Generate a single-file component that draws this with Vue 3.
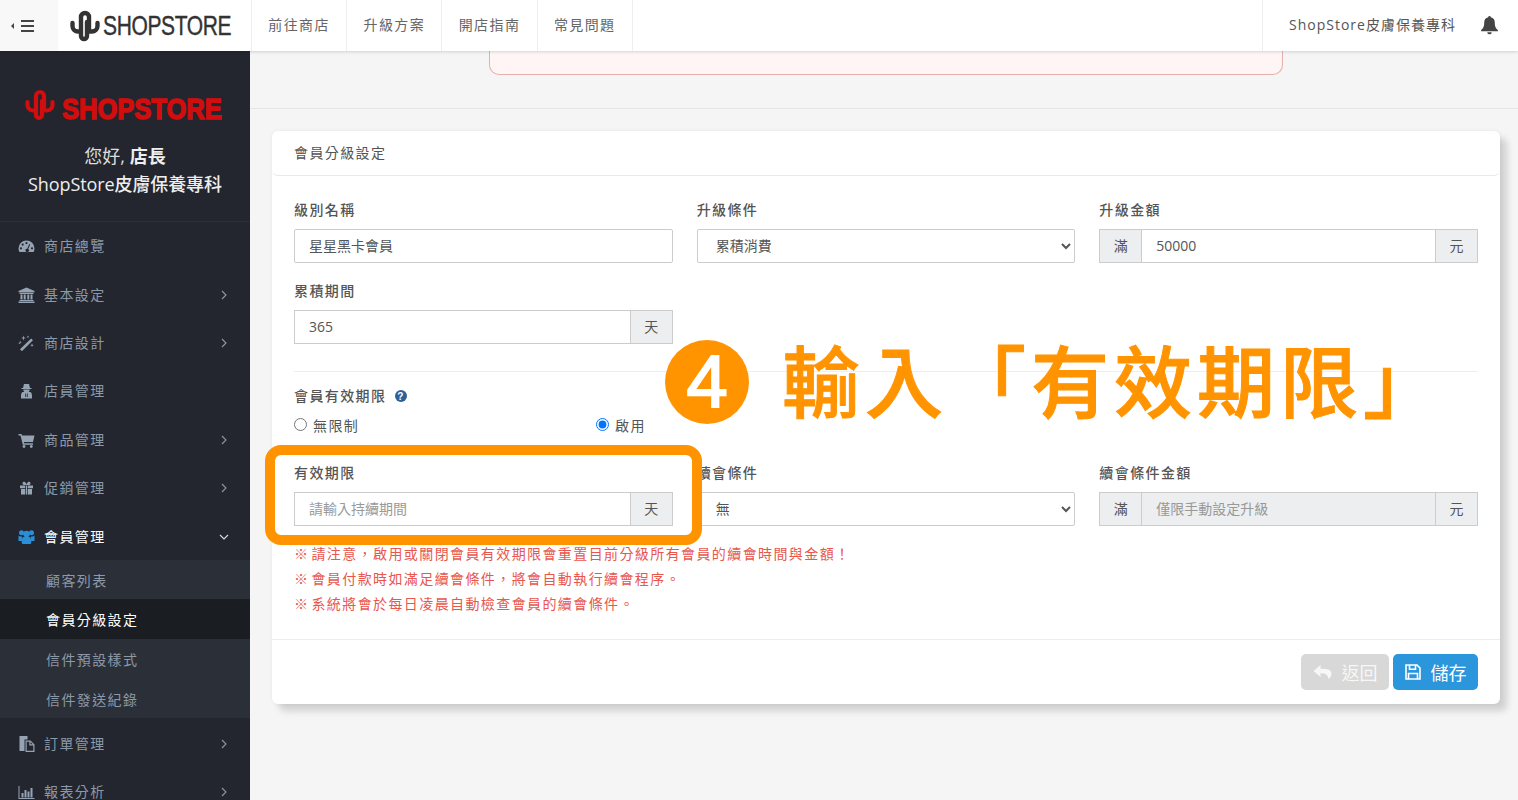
<template>
  <div class="page">
    <header class="topbar">
      <div class="toggle">
        <span class="toggle-arrow"></span>
        <span class="toggle-bars"><i></i><i></i><i></i></span>
      </div>
      <div class="brand">
        <svg class="brand-mark" viewBox="0 0 32 32"><path :d="logoPath" /></svg>
        <span class="brand-text">SHOPSTORE</span>
      </div>
      <nav class="topnav">
        <a v-for="item in topLinks" :key="item">{{ item }}</a>
      </nav>
      <div class="top-right">
        <span class="store-name">ShopStore皮膚保養專科</span>
        <svg class="bell" viewBox="0 0 16 18">
          <path d="M8 0a1.2 1.2 0 0 0-1.2 1.3C4.3 1.8 3 3.8 3 6.200c0 4.300-1.300 5.800-3 7.300v1h16v-1c-1.700-1.500-3-3-3-7.300 0-2.400-1.300-4.400-3.800-4.900A1.200 1.200 0 0 0 8 0zM5.900 15.300a2.100 2.100 0 0 0 4.200 0z" />
        </svg>
      </div>
    </header>

    <div class="layout">
      <aside class="sidebar">
        <div class="side-head">
          <div class="side-logo">
            <svg class="side-mark" viewBox="0 0 32 32"><path :d="logoPath" /></svg>
            <span class="side-logo-text">SHOPSTORE</span>
          </div>
          <p class="hello">您好, <b>店長</b></p>
          <p class="side-store">ShopStore皮膚保養專科</p>
        </div>
        <ul class="menu">
          <template v-for="item in menu" :key="item.name">
            <li class="menu-item" :class="{ open: item.children }">
              <svg class="menu-icon" viewBox="0 0 16 16" v-html="icons[item.icon]"></svg>
              <span>{{ item.name }}</span>
              <svg v-if="item.children" class="chev" viewBox="0 0 10 10"><path d="M1 3l4 4 4-4" /></svg>
              <svg v-else-if="item.arrow" class="chev" viewBox="0 0 10 10"><path d="M3 1l4 4-4 4" /></svg>
            </li>
            <ul v-if="item.children" class="submenu">
              <li v-for="sub in item.children" :key="sub" :class="{ active: sub === '會員分級設定' }">{{ sub }}</li>
            </ul>
          </template>
        </ul>
      </aside>

      <main class="content">
        <div class="alert-section">
          <div class="alert-box"></div>
        </div>
        <div class="content-body">
          <section class="card">
            <div class="card-head">會員分級設定</div>
            <div class="card-body">
              <div class="form-grid">
                <div class="field">
                  <label>級別名稱</label>
                  <input class="input" type="text" value="星星黑卡會員" />
                </div>
                <div class="field">
                  <label>升級條件</label>
                  <select class="input select"><option>累積消費</option></select>
                </div>
                <div class="field">
                  <label>升級金額</label>
                  <div class="group">
                    <span class="addon">滿</span>
                    <input class="input" type="text" value="50000" />
                    <span class="addon">元</span>
                  </div>
                </div>
                <div class="field">
                  <label>累積期間</label>
                  <div class="group">
                    <input class="input" type="text" value="365" />
                    <span class="addon">天</span>
                  </div>
                </div>
              </div>

              <hr class="divider" />

              <div class="expire-title">
                會員有效期限
                <svg class="help" viewBox="0 0 12 12">
                  <circle cx="6" cy="6" r="6" />
                  <text x="6" y="9.600" text-anchor="middle">?</text>
                </svg>
              </div>
              <div class="radio-row">
                <label class="radio"><input type="radio" name="expire" />無限制</label>
                <label class="radio"><input type="radio" name="expire" checked />啟用</label>
              </div>

              <div class="form-grid">
                <div class="field">
                  <label>有效期限</label>
                  <div class="group">
                    <input class="input" type="text" placeholder="請輸入持續期間" />
                    <span class="addon">天</span>
                  </div>
                </div>
                <div class="field">
                  <label>續會條件</label>
                  <select class="input select"><option>無</option></select>
                </div>
                <div class="field">
                  <label>續會條件金額</label>
                  <div class="group">
                    <span class="addon">滿</span>
                    <input class="input" type="text" placeholder="僅限手動設定升級" disabled />
                    <span class="addon">元</span>
                  </div>
                </div>
              </div>

              <div class="notes">
                <p v-for="note in notes" :key="note">{{ note }}</p>
              </div>
            </div>
            <div class="card-foot">
              <button class="btn btn-back">
                <svg viewBox="0 0 18 16"><path d="M7 1L0 7l7 6V9.300c4.500 0 7 1 8 5.700 1.500-1 3-2.800 3-5.500C18 5.500 13.500 4.600 7 4.700z" /></svg>
                返回
              </button>
              <button class="btn btn-save">
                <svg viewBox="0 0 16 16"><path d="M1 1h11l3 3v11H1zM4.500 1v4.200h6V1M3.500 15V9.500h9V15" /></svg>
                儲存
              </button>
            </div>
          </section>
        </div>
      </main>
    </div>

    <!-- 教學標註 -->
    <div class="mark-box"></div>
    <div class="mark-num">4</div>
    <div class="mark-text">輸入「有效期限」</div>
  </div>
</template>

<script setup>
const logoPath = 'M2.500 13v3a5.500 5.500 0 0 0 5.500 5.500h3M11 26V7a4 4 0 0 1 8 0v14.500h3a5.500 5.500 0 0 0 5.500-5.500v-3M11 26a3 3 0 0 0 6 0V12'

const topLinks = ['前往商店', '升級方案', '開店指南', '常見問題']

const notes = [
  '※ 請注意，啟用或關閉會員有效期限會重置目前分級所有會員的續會時間與金額！',
  '※ 會員付款時如滿足續會條件，將會自動執行續會程序。',
  '※ 系統將會於每日凌晨自動檢查會員的續會條件。',
]

const menu = [
  { name: '商店總覽', icon: 'dashboard' },
  { name: '基本設定', icon: 'bank', arrow: true },
  { name: '商店設計', icon: 'magic', arrow: true },
  { name: '店員管理', icon: 'secret' },
  { name: '商品管理', icon: 'cart', arrow: true },
  { name: '促銷管理', icon: 'gift', arrow: true },
  { name: '會員管理', icon: 'users', children: ['顧客列表', '會員分級設定', '信件預設樣式', '信件發送紀錄'] },
  { name: '訂單管理', icon: 'files', arrow: true },
  { name: '報表分析', icon: 'chart', arrow: true },
]

const icons = {
  dashboard: '<path fill-rule="evenodd" d="M8 2.500a8 8 0 0 0-8 8c0 1.300.3 2.500.9 3.500h14.200c.6-1 .9-2.200.9-3.500a8 8 0 0 0-8-8zM8 4a1.100 1.100 0 1 1 0 2.200A1.100 1.100 0 0 1 8 4zM4.200 5.500a1.100 1.100 0 1 1 0 2.200 1.100 1.100 0 0 1 0-2.200zM2.500 9.200a1.100 1.100 0 1 1 0 2.200 1.100 1.100 0 0 1 0-2.200zm11 0a1.100 1.100 0 1 1 0 2.200 1.100 1.100 0 0 1 0-2.200zM10.800 6l.9.400-2 4.600a1.700 1.700 0 1 1-1-.300z"/>',
  bank: '<path d="M8 .5L16 4v1.200H0V4zM1 5.800h14V7H1zM2 7.500h2v5H2zM5.200 7.500h2v5h-2zM8.800 7.500h2v5h-2zM12 7.500h2v5h-2zM1 13h14v1H1zM0 14.500h16V16H0z"/>',
  magic: '<path d="M12.600 3.400l1.900 1.900L3.400 16.200l-1.900-1.900z"/><path d="M5 .5l.6 1.900 1.900.6-1.900.6L5 5.500l-.6-1.900L2.500 3l1.900-.6zM1.500 5.500l.5 1.200 1.200.5-1.200.5-.5 1.200L1 8.700l-1.200-.5L1 7.700zM13.500 8.500l.5 1.200 1.200.5-1.200.5-.5 1.200-.5-1.200-1.200-.5 1.200-.5zM9.500.5l.4 1 1 .4-1 .4-.4 1-.4-1-1-.4 1-.4z"/>',
  secret: '<path fill-rule="evenodd" d="M5.500 1h5l1 4H13v1H3V5h1.500zM4.800 6.500h6.400c0 1-.5 2-1.200 2.500h1.500c1.200 0 2 1.500 2 4v2.500H2.500V13c0-2.500.8-4 2-4H6c-.7-.5-1.200-1.500-1.200-2.500zM6.800 10.500v3.500h.8v-3.500zm1.600 0v3.500h.8v-3.500z"/>',
  cart: '<path d="M0 2h3l.5 1.500H16l-1.500 6.500H5.300l.3 1.300H14.500v1.400H4.300L2 3.400H0z"/><circle cx="5.500" cy="14.500" r="1.400"/><circle cx="12.800" cy="14.500" r="1.400"/>',
  gift: '<path fill-rule="evenodd" d="M1.500 5.500h5.300v2.800H1.500zM9.200 5.500h5.300v2.800H9.200zM2.500 9h4.300v5.500H2.500zM9.200 9h4.300v5.500H9.200zM7.500 5.500h1v9h-1zM8 5C6 5 4 5 4 3.400 4 2.100 5.300 1.500 6.300 2.100 7.200 2.700 8 4 8 5zm0 0c0-1 .8-2.300 1.700-2.900 1-.6 2.300 0 2.300 1.300C12 5 10 5 8 5z"/>',
  users: '<circle cx="3" cy="3.800" r="2.500"/><circle cx="13" cy="3.800" r="2.500"/><circle cx="8" cy="5" r="3.200"/><path d="M0 6.500c1 1 2.500 1.200 3.800 1-.2 1.700-.5 3-.5 4.500H0zM16 6.500c-1 1-2.500 1.200-3.800 1 .2 1.700.5 3 .5 4.500H16zM4.700 8h6.600c1.200 1.200 1.500 3 1.500 5.200 0 1.200-.5 1.800-1.500 1.800H4.700c-1 0-1.500-.6-1.500-1.800C3.200 11 3.500 9.200 4.700 8z"/>',
  files: '<path d="M1 0h8v3.500H6V15H1z"/><path fill-rule="evenodd" d="M7 4.500h5l4 4V16H7zm1.200 1.200v9.100h6.600V9.500h-4V5.700zm3.800.4v2.200h2.200z"/>',
  chart: '<path d="M0 2h1v12h15v1H0zM3 9h2v4.500H3zM6 6h2v7.500H6zM9 7.500h2v6H9zM12 4h2v9.500h-2z"/>',
}
</script>

<style>
html,
body {
  margin: 0;
  overflow: hidden;
  background: #f5f5f5;
}
</style>

<style scoped>
* {
  box-sizing: border-box;
}

.page {
  position: relative;
  width: 100%;
  height: 800px;
  overflow: hidden;
  background: #f5f5f5;
  color: #555;
  font-family: "Open Sans", "Noto Sans CJK TC", sans-serif;
  font-size: 14px;
}

.topbar {
  position: relative;
  z-index: 2;
  display: flex;
  height: 51px;
  background: #fff;
  box-shadow: 0 1px 3px rgba(0, 0, 0, 0.15);
}

.toggle {
  display: flex;
  align-items: center;
  gap: 7px;
  width: 58px;
  padding-left: 11px;
  background: #f8f8f8;
}

.toggle-arrow {
  width: 0;
  height: 0;
  border-top: 3px solid transparent;
  border-bottom: 3px solid transparent;
  border-right: 3px solid #444;
}

.toggle-bars {
  display: flex;
  flex-direction: column;
  gap: 3px;
}

.toggle-bars i {
  display: block;
  width: 13px;
  height: 2px;
  background: #444;
}

.brand {
  display: flex;
  align-items: center;
  width: 193px;
  padding-left: 12px;
  overflow: hidden;
}

.brand-mark {
  flex: none;
  width: 32px;
  height: 32px;
  fill: none;
  stroke: #333;
  stroke-width: 4.400;
  stroke-linecap: round;
  margin-top: 1px;
}

.brand-text {
  flex: none;
  margin-left: 1px;
  color: #333;
  font-family: "Liberation Sans", sans-serif;
  font-size: 28px;
  letter-spacing: -0.5px;
  transform: scaleX(0.75);
  transform-origin: left center;
  -webkit-text-stroke: 0.4px #333;
}

.topnav {
  display: flex;
  flex: 1;
}

.topnav a {
  display: flex;
  align-items: center;
  padding: 0 16.300px 3px;
  border-left: 1px solid #eee;
  color: #666;
  letter-spacing: 1.400px;
}

.topnav a:last-child {
  border-right: 1px solid #eee;
}

.top-right {
  display: flex;
  align-items: center;
  width: 256px;
  padding-left: 26px;
  border-left: 1px solid #eee;
}

.store-name {
  margin-bottom: 3px;
  color: #555;
  font-size: 14px;
  letter-spacing: 1px;
}

.bell {
  width: 17px;
  height: 19px;
  margin-left: 25px;
  fill: #444;
}

.layout {
  display: flex;
  height: 749px;
}

.sidebar {
  flex: none;
  width: 250px;
  overflow: hidden;
  background: #23262e;
}

.side-head {
  height: 171px;
  padding-top: 38px;
  border-bottom: 1px solid #2b2f38;
  text-align: center;
}

.side-logo {
  display: flex;
  align-items: center;
  height: 32px;
  padding-left: 25px;
}

.side-mark {
  flex: none;
  width: 32px;
  height: 32px;
  fill: none;
  stroke: #d10d0d;
  stroke-width: 4.200;
  stroke-linecap: round;
}

.side-logo-text {
  flex: none;
  margin: 8px 0 0 5px;
  color: #d10d0d;
  font-family: "Liberation Sans", sans-serif;
  font-size: 30px;
  font-weight: 700;
  transform: scaleX(0.85);
  transform-origin: left center;
  -webkit-text-stroke: 1.500px #d10d0d;
}

.hello {
  margin: 21px 0 0;
  color: #ddd;
  font-size: 18px;
  line-height: 28px;
}

.hello b {
  color: #eee;
  font-weight: 700;
}

.side-store {
  margin: 0;
  color: #eee;
  font-size: 18px;
  font-weight: 500;
  line-height: 28px;
  letter-spacing: -0.1px;
}

.menu,
.submenu {
  margin: 0;
  padding: 0;
  list-style: none;
}

.menu {
  margin-top: -1px;
}

.menu-item {
  display: flex;
  align-items: center;
  height: 48.400px;
  padding-left: 18px;
  color: #8b99a8;
  letter-spacing: 1.400px;
}

.menu-item.open {
  color: #fff;
}

.menu-icon {
  flex: none;
  width: 17px;
  height: 16px;
  margin: 2px 9px 0 0;
  fill: #95a3b3;
}

.menu-item.open .menu-icon {
  fill: #2b8fd8;
}

.chev {
  width: 10px;
  height: 10px;
  margin: 2px 21px 0 auto;
  fill: none;
  stroke: #8b99a8;
  stroke-width: 1.100;
}

.menu-item.open .chev {
  stroke: #ddd;
}

.submenu {
  background: #2b2f38;
}

.submenu li {
  display: flex;
  align-items: center;
  height: 39.700px;
  padding-left: 46px;
  color: #8b99a8;
  letter-spacing: 1.400px;
}

.submenu li.active {
  background: #1a1d21;
  color: #fff;
}

.content {
  flex: 1;
  min-width: 0;
}

.alert-section {
  height: 58px;
  border-bottom: 1px solid #e6e6e6;
}

.alert-box {
  width: 794px;
  height: 24px;
  margin-left: 239px;
  border: 1px solid #e4b1ae;
  border-top: none;
  border-radius: 0 0 10px 10px;
  background: #fff5f4;
}

.content-body {
  padding: 22px 18px 0 22px;
}

.card {
  height: 573px;
  border-radius: 6px;
  background: #fff;
  box-shadow: 7px 7px 7px rgba(0, 0, 0, 0.15), 0 0 4px rgba(0, 0, 0, 0.06);
}

.card-head {
  display: flex;
  align-items: center;
  height: 45px;
  padding: 0 0 2px 22px;
  border-bottom: 1px solid #e7eaec;
  border-radius: 6px;
  color: #555;
  letter-spacing: 1.400px;
}

.card-body {
  height: 464px;
  padding: 23px 22px 0;
  border-bottom: 1px solid #eee;
}

.form-grid {
  display: grid;
  grid-template-columns: repeat(3, 1fr);
  gap: 17px 24px;
}

.field label {
  display: block;
  height: 24px;
  margin-bottom: 6px;
  color: #555;
  font-weight: 500;
  line-height: 22px;
  letter-spacing: 1.400px;
}

.input {
  display: block;
  flex: 1;
  width: 100%;
  min-width: 0;
  height: 34px;
  padding: 0 14px 2px;
  border: 1px solid #ccc;
  border-radius: 2px;
  outline: none;
  background: #fff;
  color: #555;
  font: inherit;
}

.input::placeholder {
  color: #999;
  opacity: 1;
}

.input:disabled {
  background: #eceef0;
}

.group {
  display: flex;
  height: 34px;
}

.group .input {
  border-radius: 0;
}

.addon {
  display: flex;
  flex: none;
  align-items: center;
  justify-content: center;
  width: 43px;
  padding-bottom: 2px;
  border: 1px solid #ccc;
  background: #eceef0;
  color: #555;
}

.addon:first-child {
  margin-right: -1px;
}

.addon:last-child {
  margin-left: -1px;
}

.divider {
  height: 1px;
  margin: 27px 0 12px;
  border: none;
  background: #eee;
}

.expire-title {
  display: flex;
  align-items: center;
  height: 24px;
  padding-bottom: 2px;
  color: #555;
  font-weight: 500;
  letter-spacing: 1.400px;
}

.help {
  width: 12px;
  height: 12px;
  margin: 2px 0 0 9px;
  fill: #2f6199;
}

.help text {
  fill: #fff;
  font-family: "Liberation Sans", sans-serif;
  font-size: 10px;
  font-weight: 700;
}

.radio-row {
  display: grid;
  grid-template-columns: 302px 302px;
  height: 28px;
  margin: 4px 0 22px;
}

.radio {
  display: flex;
  align-items: center;
  padding-bottom: 2px;
  color: #555;
  letter-spacing: 1.400px;
}

.radio input {
  width: 13px;
  height: 13px;
  margin: 0 6px 2px 0;
}

.notes {
  margin-top: 16px;
}

.notes p {
  margin: 0;
  color: #e8574e;
  line-height: 24px;
  height: 25px;
  letter-spacing: 1.400px;
  word-spacing: -3px;
}

.card-foot {
  display: flex;
  justify-content: flex-end;
  gap: 4px;
  padding: 14px 22px;
}

.btn {
  display: flex;
  align-items: center;
  justify-content: center;
  gap: 10px;
  height: 36px;
  border: none;
  border-radius: 5px;
  color: #fff;
  font-family: inherit;
  font-size: 18px;
}

.btn-back {
  width: 88px;
  background: #d8d8d8;
  color: #f7f7f7;
}

.btn-back svg {
  width: 19px;
  height: 16px;
  fill: currentColor;
}

.btn-save {
  width: 85px;
  background: #2b96dc;
}

.btn-save svg {
  width: 16px;
  height: 16px;
  fill: none;
  stroke: currentColor;
  stroke-width: 1.600;
}

.mark-box {
  position: absolute;
  left: 265px;
  top: 445px;
  width: 437px;
  height: 100px;
  border: 10px solid #ff9400;
  border-radius: 16px;
}

.mark-num {
  position: absolute;
  left: 665px;
  top: 340px;
  width: 84px;
  height: 84px;
  border-radius: 50%;
  background: #ff9400;
  color: #fff;
  font-family: "Liberation Sans", sans-serif;
  font-size: 74px;
  font-weight: 400;
  line-height: 84px;
  text-align: center;
  -webkit-text-stroke: 2px #fff;
}

.mark-text {
  position: absolute;
  left: 782px;
  top: 320px;
  color: #ff9400;
  font-family: "Noto Sans CJK TC", sans-serif;
  font-size: 78px;
  font-weight: 500;
  line-height: 116px;
  letter-spacing: 5px;
  white-space: nowrap;
  -webkit-text-stroke: 1px #ff9400;
}
</style>
